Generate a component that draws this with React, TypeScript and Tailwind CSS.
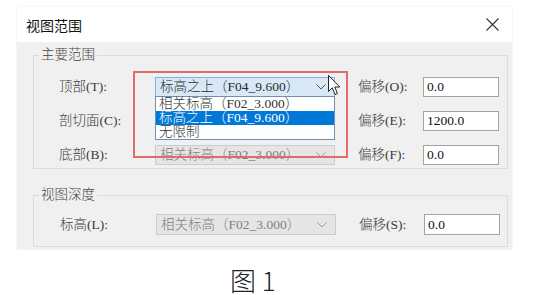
import React from "react";

const body = { fontFamily: '"Liberation Serif", "Noto Sans CJK SC", serif' };
const sans = { fontFamily: '"Noto Sans CJK SC", "Noto Sans", sans-serif' };

function Chevron({ color }: { color: string }) {
  return (
    <svg width="10" height="6" viewBox="0 0 10 6" className="shrink-0">
      <polyline points="0.5,0.5 5,5 9.5,0.5" fill="none" stroke={color} strokeWidth="1" />
    </svg>
  );
}

function Select({ value, variant, h = 20 }: { value: string; variant: "focus" | "disabled"; h?: number }) {
  const cls =
    variant === "focus"
      ? "border-[#7eb4ea] bg-[#d9e8f7] text-[#2a2a2a]"
      : "border-[#cccccc] bg-[#e5e5e5] text-[#808080]";
  return (
    <div
      className={`w-[180px] border flex items-center justify-between pl-[4px] pr-[8px] text-[13.5px] leading-none ${cls}`}
      style={{ height: h }}
    >
      <span className="whitespace-nowrap">{value}</span>
      <Chevron color={variant === "focus" ? "#555" : "#9a9a9a"} />
    </div>
  );
}

function Input({ value, h = 20 }: { value: string; h?: number }) {
  return (
    <div
      className="w-[76px] border border-[#a3a3a3] bg-white flex items-center pl-[3px] text-[13.5px] leading-none text-[#111]"
      style={{ height: h }}
    >
      {value}
    </div>
  );
}

function Row({
  label,
  select,
  offLabel,
  input,
  h = 20,
}: {
  label: string;
  select: React.ReactNode;
  offLabel: string;
  input: string;
  h?: number;
}) {
  return (
    <div className="flex items-center" style={{ height: h }}>
      <div className="w-[96px] text-[13.5px] leading-none text-[#3a3a3a] whitespace-nowrap">{label}</div>
      {select}
      <div className="ml-[23px] w-[65px] text-[13.5px] leading-none text-[#3a3a3a] whitespace-nowrap">{offLabel}</div>
      <Input value={input} h={h} />
    </div>
  );
}

export default function App() {
  return (
    <div className="w-[551px] h-[295px] bg-white relative overflow-hidden pt-[7px] pl-[17px] font-light" style={body}>
      <div className="w-[495px] shadow-[0_0_2px_rgba(0,0,0,0.10)]">
        {/* title bar */}
        <div className="h-[35px] bg-white flex items-center justify-between pl-[9px] pr-[13px]">
          <span className="text-[14px] text-[#111] leading-none font-normal" style={sans}>
            视图范围
          </span>
          <svg width="13" height="13" viewBox="0 0 13 13">
            <line x1="0.5" y1="0.5" x2="12.5" y2="12.5" stroke="#333" strokeWidth="1.1" />
            <line x1="12.5" y1="0.5" x2="0.5" y2="12.5" stroke="#333" strokeWidth="1.1" />
          </svg>
        </div>
        {/* body */}
        <div className="bg-[#f0f0f0] pt-[5px] pl-[16px] pr-[4px] pb-[2px]">
          <fieldset className="border border-[#dcdcdc] w-[475px]">
            <legend className="ml-[5px] px-[2px] text-[13.5px] leading-[16px] text-[#444]">主要范围</legend>
            <div className="pl-[25px] pt-[14px] pb-[3px] flex flex-col gap-[14px] relative">
              <div className="relative">
                <Row label="顶部(T):" select={<Select value="标高之上（F04_9.600）" variant="focus" />} offLabel="偏移(O):" input="0.0" />
                {/* dropdown list */}
                <div className="absolute left-[96px] top-[19px] w-[180px] border border-[#6e8fb5] bg-white z-10 text-[13.5px] leading-[14px]">
                  <div className="h-[14px] pl-[3px] text-[#333] whitespace-nowrap">相关标高（F02_3.000）</div>
                  <div className="h-[14px] pl-[3px] bg-[#0078d7] text-white whitespace-nowrap">标高之上（F04_9.600）</div>
                  <div className="h-[14px] pl-[3px] text-[#333] whitespace-nowrap">无限制</div>
                </div>
              </div>
              <Row label="剖切面(C):" select={<div className="w-[180px] h-[20px] border border-[#cccccc] bg-[#e5e5e5]" />} offLabel="偏移(E):" input="1200.0" />
              <Row label="底部(B):" select={<Select value="相关标高（F02_3.000）" variant="disabled" />} offLabel="偏移(F):" input="0.0" />
            </div>
          </fieldset>
          <fieldset className="border border-[#dcdcdc] w-[475px] mt-[18px]">
            <legend className="ml-[5px] px-[2px] text-[13.5px] leading-[16px] text-[#444]">视图深度</legend>
            <div className="pl-[26px] pt-[11px] pb-[11px]">
              <Row label="标高(L):" select={<Select value="相关标高（F02_3.000）" variant="disabled" h={21} />} offLabel="偏移(S):" input="0.0" h={21} />
            </div>
          </fieldset>
        </div>
      </div>
      {/* caption */}
      <div className="mt-[18px] pl-[213px] text-[26px] leading-[26px] font-light text-[#222]" style={sans}>
        图 1
      </div>

      {/* red annotation box */}
      <div className="absolute left-[133px] top-[71px] w-[215px] h-[87px] border-2 border-[#e36a6a] pointer-events-none z-20" />
      {/* mouse cursor */}
      <svg className="absolute left-[328px] top-[75px] z-30" width="13" height="21" viewBox="0 0 13 21">
        <path d="M0.5,0.5 L0.5,16.5 L4.3,12.8 L7,19.5 L9.4,18.5 L6.8,12 L11.8,12 Z" fill="#fff" stroke="#222" strokeWidth="1" strokeLinejoin="round" />
      </svg>
    </div>
  );
}
